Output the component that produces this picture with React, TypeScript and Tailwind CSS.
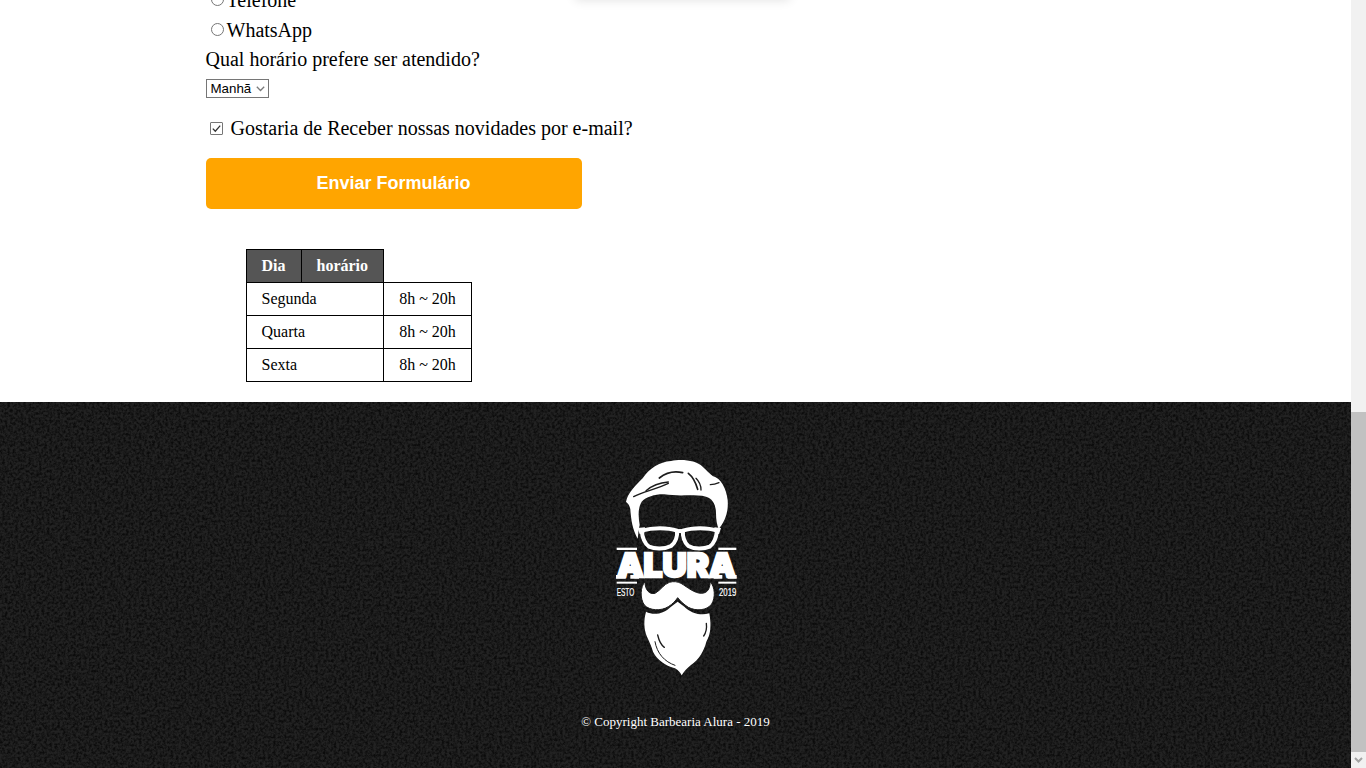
const serif = "font-['Liberation_Serif',serif]"

function Logo() {
  return (
    <svg viewBox="0 0 570 720" className="relative block w-[190px] h-[240px] mx-auto">
      {/* hair */}
      <path
        fill="#fff"
        d="M135 155 C140 130 165 105 185 85 C205 55 235 36 270 33 C300 26 345 30 365 50 C378 62 385 70 395 78 C420 85 436 115 440 150 C443 185 432 215 413 237 C408 225 405 210 405 190 C405 165 395 145 375 140 C340 132 290 140 250 133 C225 132 195 140 182 155 C170 175 172 200 176 225 C172 240 172 255 170 266 C155 240 150 210 148 178 C146 165 140 160 135 155 Z"
      />
      <g fill="none" stroke="#1c1c1c" strokeLinecap="round">
        <path strokeWidth="4" d="M158 140 C185 125 225 118 262 100" />
        <path strokeWidth="4" d="M195 122 C215 105 240 98 262 96" />
        <path strokeWidth="5" d="M235 84 C255 68 280 62 305 68" />
        <path strokeWidth="5" d="M322 70 C335 80 345 100 350 118" />
        <path strokeWidth="4" d="M345 85 C355 95 360 108 360 120" />
        <path strokeWidth="4" d="M388 104 C397 104 405 102 414 98" />
      </g>
      {/* glasses */}
      <g fill="none" stroke="#fff" strokeWidth="12" strokeLinejoin="round">
        <path d="M182 242 C215 232 260 232 288 242 C290 258 284 278 270 288 C250 298 222 298 204 290 C190 280 184 262 182 242 Z" />
        <path d="M306 242 C335 232 380 232 408 242 C406 262 400 280 386 290 C368 298 340 298 322 288 C310 278 304 258 306 242 Z" />
        <path d="M286 246 C294 242 300 242 308 246" />
      </g>
      <path fill="#fff" d="M170 234 L192 232 L190 250 L176 252 Z M400 232 L420 234 L414 252 L402 250 Z" />
      {/* rules */}
      <rect x="107" y="293" width="61" height="7" fill="#fff" />
      <rect x="412" y="293" width="54" height="7" fill="#fff" />
      <rect x="107" y="395" width="61" height="6" fill="#fff" />
      <rect x="412" y="395" width="54" height="6" fill="#fff" />
      {/* wordmark */}
      <text x="108" y="382" fill="#fff" stroke="#fff" strokeWidth="7" fontFamily="Inter, sans-serif" fontWeight="900" fontSize="98" textLength="356" lengthAdjust="spacingAndGlyphs">
        ALURA
      </text>
      {/* feet of the two A's */}
      <path fill="#fff" d="M105 375 H134 V386 H105 Z M148 375 H174 V386 H148 Z M398 375 H424 V386 H398 Z M440 375 H467 V386 H440 Z" />
      <text x="107" y="439" fill="#fff" stroke="#fff" strokeWidth="0.6" fontFamily="'Liberation Sans', sans-serif" fontSize="33" textLength="53" lengthAdjust="spacingAndGlyphs">
        ESTO
      </text>
      <text x="414" y="439" fill="#fff" stroke="#fff" strokeWidth="0.6" fontFamily="'Liberation Sans', sans-serif" fontSize="33" textLength="52" lengthAdjust="spacingAndGlyphs">
        2019
      </text>
      {/* beard */}
      <path
        fill="#fff"
        d="M195 485 C188 510 188 535 198 560 C205 575 212 590 216 605 C228 630 255 648 282 655 C292 660 298 668 302 676 C308 665 318 655 330 645 C355 628 370 600 376 575 C388 555 392 530 385 490 C360 498 330 490 310 470 L290 455 L270 470 C250 490 220 498 195 485 Z"
      />
      <g fill="none" stroke="#1c1c1c" strokeLinecap="round">
        <path strokeWidth="4" d="M230 555 C234 572 240 585 250 592" />
        <path strokeWidth="3" d="M222 575 C228 610 250 635 282 646" />
        <path strokeWidth="4" d="M376 520 C378 535 375 548 368 558" />
      </g>
      {/* moustache */}
      <path
        fill="#fff"
        stroke="#1c1c1c"
        strokeWidth="3"
        d="M192 395 C178 410 176 445 190 465 C205 482 240 484 262 470 C275 462 284 452 290 443 C298 453 308 463 322 472 C345 484 378 482 392 462 C404 442 402 412 388 395 C386 410 385 428 362 430 C340 430 320 412 300 400 C290 395 278 393 265 397 C248 403 240 420 222 430 C205 434 192 420 192 395 Z"
      />
    </svg>
  )
}

function Radio() {
  return (
    <input
      type="radio"
      name="contato"
      className="appearance-none m-0 ml-[5px] mr-[3px] mb-[1px] w-[13px] h-[13px] rounded-full border-[1.5px] border-[#767676] bg-white"
    />
  )
}

export default function App() {
  return (
    <div className={`flex h-screen overflow-hidden bg-white text-black ${serif}`}>
      <div className="relative flex-1 min-w-0 overflow-hidden">
        <div className="absolute left-[575px] top-[-40px] w-[215px] h-[40px] shadow-[0_0_10px_rgba(0,0,0,0.12)]" />

        <main className="w-[940px] mx-auto mt-[-15px] text-[20px]">
          <label className="flex items-center h-[30px]">
            <Radio />
            Telefone
          </label>
          <label className="flex items-center h-[30px]">
            <Radio />
            WhatsApp
          </label>
          <div className="h-[30px] leading-[28px]">Qual horário prefere ser atendido?</div>
          <div className="relative mt-[4px] w-[63px] h-[19px]">
            <select className="block appearance-none w-full h-full pl-[4px] border border-[#767676] bg-white text-[13.33px] leading-[15px] font-['Liberation_Sans',sans-serif]">
              <option>Manhã</option>
            </select>
            <svg viewBox="0 0 9 6" className="absolute right-[4px] top-[7px] w-[9px] h-[6px] pointer-events-none">
              <path d="M0.8 0.8 L4.5 4.5 L8.2 0.8" fill="none" stroke="#7a7a7a" strokeWidth="1.3" />
            </svg>
          </div>

          <label className="flex items-center h-[30px] mt-[16px] pb-[2px]">
            <span className="relative ml-[4px] mr-[8px] w-[13px] h-[13px] rounded-[1px] border border-[#767676] bg-white">
              <svg viewBox="0 0 13 13" className="absolute left-[-1px] top-[-1px] w-[13px] h-[13px]">
                <path d="M2.8 6.6 L5.3 9.2 L10.2 3.6" fill="none" stroke="#333" strokeWidth="1.3" />
              </svg>
            </span>
            Gostaria de Receber nossas novidades por e-mail?
          </label>

          <button className="block mt-[14px] w-[376px] h-[51px] rounded-[5px] bg-[#ffa500] text-white text-[18px] font-bold font-['Liberation_Sans',sans-serif]">
            Enviar Formulário
          </button>

          <table className="block mt-[40px] ml-[40px] border-collapse text-[16px]">
            <thead className="block">
              <tr>
                <th className="h-[33px] px-[15px] border border-black bg-[#555] text-white font-bold">Dia</th>
                <th className="h-[33px] px-[15px] border border-black bg-[#555] text-white font-bold">horário</th>
              </tr>
            </thead>
            <tbody className="block mt-[-1px]">
              {["Segunda", "Quarta", "Sexta"].map((dia) => (
                <tr key={dia}>
                  <td className="w-[137px] h-[33px] px-[15px] border border-black">{dia}</td>
                  <td className="w-[88px] h-[33px] pl-[1px] text-center border border-black">8h ~ 20h</td>
                </tr>
              ))}
            </tbody>
          </table>
        </main>

        <footer className="relative mt-[20px] h-[366px] bg-[#222222] overflow-hidden">
          <svg className="absolute inset-0 w-full h-full">
            <filter id="grain">
              <feTurbulence type="fractalNoise" baseFrequency="0.38" numOctaves="3" seed="4" />
              <feColorMatrix values="0 0 0 0 0  0 0 0 0 0  0 0 0 0 0  2.4 0 0 0 -0.85" />
            </filter>
            <rect width="100%" height="100%" filter="url(#grain)" opacity="0.65" />
          </svg>
          <div className="relative pt-[48px]">
            <Logo />
            <p className="mt-[23px] text-center text-white text-[13px] leading-[17px]">© Copyright Barbearia Alura - 2019</p>
          </div>
        </footer>
      </div>

      <div className="flex flex-col w-[15px] shrink-0 bg-[#f1f1f1]">
        <div className="h-[412px]" />
        <div className="h-[340px] bg-[#c1c1c1]" />
        <div className="flex flex-1 items-center justify-center">
          <svg viewBox="0 0 9 6" className="w-[9px] h-[6px]">
            <path d="M1 1 L4.5 4.5 L8 1" fill="none" stroke="#a3a3a3" strokeWidth="2" />
          </svg>
        </div>
      </div>
    </div>
  )
}
